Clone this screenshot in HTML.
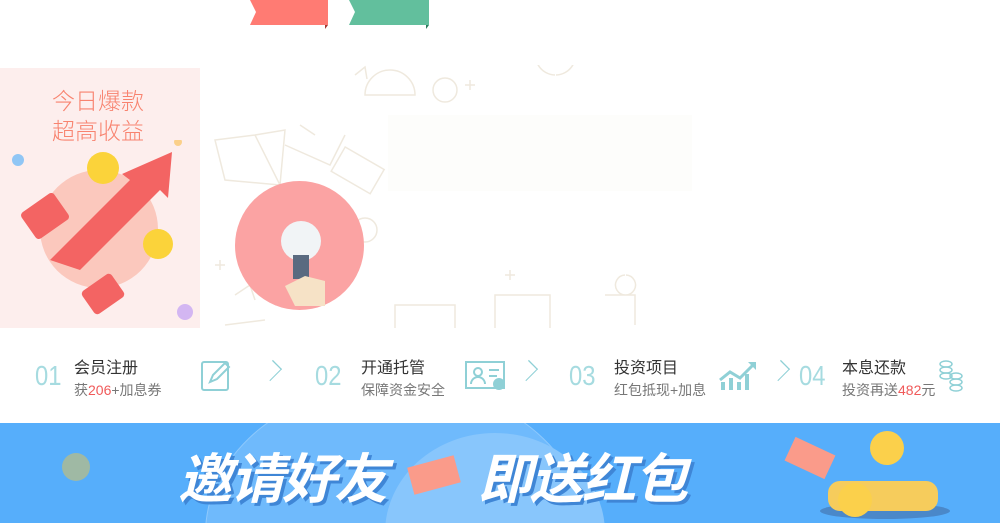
<!DOCTYPE html>
<html><head><meta charset="utf-8"><style>
html,body{margin:0;width:1000px;height:523px;overflow:hidden}
body{background:#fff;position:relative;font-family:"Liberation Sans","Noto Sans CJK SC",sans-serif}
.a{position:absolute}
.num{position:absolute;font-size:28px;color:#a6dbe0;font-weight:normal;top:360px;transform:scaleX(0.85);transform-origin:left}
.t1{position:absolute;top:354px;font-size:16px;color:#333}
.t2{position:absolute;top:380px;font-size:14px;color:#777}
.r{color:#f05a5a}
.chev{position:absolute;top:364px;width:12px;height:12px;border-right:1.5px solid #8fd0d6;border-top:1.5px solid #8fd0d6;transform:rotate(45deg) scale(1,1.3)}
</style></head><body>
<svg class="a" style="left:248px;top:0" width="84" height="30"><polygon points="2,0 80,0 80,25 2,25 8,12" fill="#ff7b73"/><polygon points="77,25 80,25 77,29" fill="#a03a35"/></svg>
<svg class="a" style="left:347px;top:0" width="84" height="30"><polygon points="2,0 82,0 82,25 2,25 8,12" fill="#62bf9d"/><polygon points="79,25 82,25 79,29" fill="#2a7a5c"/></svg>

<div class="a" style="left:0;top:68px;width:200px;height:260px;background:#fdeeed"></div>
<div class="a" style="left:52px;top:84px;font-size:23px;line-height:30px;color:#f8836f;font-family:'Noto Sans CJK SC',sans-serif;font-weight:300">今日爆款<br>超高收益</div>
<div class="a" style="left:40px;top:170px;width:118px;height:118px;border-radius:50%;background:#fbc8bd"></div>
<svg class="a" style="left:0;top:140px" width="200" height="190">
<polygon points="50,120 130,40 122,34 172,12 168,58 160,50 80,130" fill="#f36463"/>
<rect x="25" y="60" width="40" height="32" rx="4" fill="#f36463" transform="rotate(-35 45 76)"/>
<rect x="85" y="140" width="36" height="28" rx="4" fill="#f36463" transform="rotate(-35 103 154)"/>
<circle cx="103" cy="28" r="16" fill="#fbd33a"/><circle cx="158" cy="104" r="15" fill="#fbd33a"/>
<circle cx="18" cy="20" r="6" fill="#90c6f5"/><circle cx="185" cy="172" r="8" fill="#d3b6f2"/><circle cx="178" cy="2" r="4" fill="#fbd08a"/>
</svg>

<svg class="a" style="left:205px;top:65px" width="500" height="263" fill="none" stroke="#efe9de" stroke-width="1.5">
<path d="M10,75 L50,70 L75,120 L20,115Z M50,70 L80,65 L75,120"/>
<path d="M80,80 L125,100 L140,70 M95,60 L110,70"/>
<rect x="130" y="90" width="45" height="28" transform="rotate(30 150 105)"/>
<path d="M160,30 a25,25 0 0 1 50,0Z"/>
<circle cx="240" cy="25" r="12"/><path d="M150,10 l10,-8 l2,12"/>
<rect x="190" y="240" width="60" height="25"/><rect x="290" y="230" width="55" height="35"/>
<path d="M30,230 l15,-10 l5,15 M20,260 l40,-5 M400,230 l30,0 l0,30 M420,210 a10,10 0 1 0 1,0"/>
<path d="M260,20 l10,0 M265,15 l0,10 M300,210 l10,0 M305,205 l0,10 M10,200 l10,0 M15,195 l0,10"/>
<circle cx="160" cy="165" r="12"/><path d="M350,10 a20,20 0 1 1 1,0"/>
</svg>
<div class="a" style="left:388px;top:115px;width:304px;height:76px;background:#fdfdfb"></div>
<div class="a" style="left:235px;top:181px;width:129px;height:129px;border-radius:50%;background:#fba3a3"></div>
<svg class="a" style="left:235px;top:181px" width="130" height="130">
<circle cx="66" cy="60" r="20" fill="#f1f4f6"/><rect x="58" y="74" width="16" height="24" fill="#5a6a80"/>
<path d="M50,105 l20,-10 l20,5 l0,25 l-30,0Z" fill="#f6e2c6"/>
</svg>

<div class="num" style="left:35px">01</div>
<div class="t1" style="left:74px">会员注册</div><div class="t2" style="left:74px">获<span class="r">206</span>+加息券</div>
<svg class="a" style="left:200px;top:360px" width="32" height="32" fill="none" stroke="#8fd0d6" stroke-width="2"><rect x="2" y="2" width="26" height="28" rx="2"/><path d="M10,22 l3,-7 l12,-12 l4,4 l-12,12Z"/></svg>
<div class="chev" style="left:265px"></div>
<div class="num" style="left:315px">02</div>
<div class="t1" style="left:361px">开通托管</div><div class="t2" style="left:361px">保障资金安全</div>
<svg class="a" style="left:464px;top:360px" width="44" height="32" fill="none" stroke="#8fd0d6" stroke-width="2"><rect x="2" y="2" width="38" height="26"/><circle cx="14" cy="12" r="4"/><path d="M7,24 a7,7 0 0 1 14,0 M25,10 h10 M25,16 h8"/><circle cx="35" cy="24" r="5" fill="#8fd0d6"/></svg>
<div class="chev" style="left:521px"></div>
<div class="num" style="left:569px">03</div>
<div class="t1" style="left:614px">投资项目</div><div class="t2" style="left:614px">红包抵现+加息</div>
<svg class="a" style="left:718px;top:358px" width="40" height="34"><path d="M2,22 l10,-8 l10,6 l14,-14" stroke="#8fd0d6" stroke-width="3" fill="none"/><path d="M30,4 l8,0 l0,8Z" fill="#8fd0d6"/><rect x="3" y="24" width="4" height="8" fill="#8fd0d6"/><rect x="11" y="20" width="4" height="12" fill="#8fd0d6"/><rect x="19" y="24" width="4" height="8" fill="#8fd0d6"/><rect x="27" y="16" width="4" height="16" fill="#8fd0d6"/></svg>
<div class="chev" style="left:773px"></div>
<div class="num" style="left:799px">04</div>
<div class="t1" style="left:842px">本息还款</div><div class="t2" style="left:842px">投资再送<span class="r">482</span>元</div>
<svg class="a" style="left:938px;top:360px" width="28" height="32" fill="none" stroke="#8fd0d6" stroke-width="1.5"><ellipse cx="8" cy="4" rx="6" ry="3"/><ellipse cx="8" cy="10" rx="6" ry="3"/><ellipse cx="8" cy="16" rx="6" ry="3"/><ellipse cx="18" cy="16" rx="6" ry="3"/><ellipse cx="18" cy="22" rx="6" ry="3"/><ellipse cx="18" cy="28" rx="6" ry="3"/></svg>

<div class="a" style="left:0;top:423px;width:1000px;height:100px;background:#56aefb;overflow:hidden">
<div class="a" style="left:205px;top:-40px;width:380px;height:300px;border-radius:50%;background:#6fbafc;border:1px solid #8ec9fc"></div>
<div class="a" style="left:385px;top:10px;width:220px;height:200px;border-radius:50%;background:#88c6fc"></div>
<div class="a" style="left:62px;top:30px;width:28px;height:28px;border-radius:50%;background:#9fb9a4"></div>
<div class="a" style="left:178px;top:12px;font-size:54px;font-weight:bold;font-style:italic;color:#fff;letter-spacing:-2px;font-family:'Noto Sans CJK SC',sans-serif;line-height:80px;text-shadow:3px 3px 0 #3f86d6">邀请好友</div>
<div class="a" style="left:478px;top:12px;font-size:54px;font-weight:bold;font-style:italic;color:#fff;letter-spacing:-2px;font-family:'Noto Sans CJK SC',sans-serif;line-height:80px;text-shadow:3px 3px 0 #3f86d6">即送红包</div>
<div class="a" style="left:410px;top:38px;width:48px;height:28px;background:#fa9b8a;transform:rotate(-15deg)"></div>
<div class="a" style="left:788px;top:22px;width:44px;height:26px;background:#fa9b8a;transform:rotate(25deg)"></div>
<div class="a" style="left:870px;top:8px;width:34px;height:34px;border-radius:50%;background:#fbd04b"></div>
<div class="a" style="left:820px;top:80px;width:130px;height:16px;border-radius:50%;background:#4a88c9"></div>
<div class="a" style="left:828px;top:58px;width:110px;height:30px;border-radius:12px;background:#f6cc5c"></div>
<div class="a" style="left:838px;top:60px;width:34px;height:34px;border-radius:50%;background:#fbd04b"></div>
</div>
</body></html>
